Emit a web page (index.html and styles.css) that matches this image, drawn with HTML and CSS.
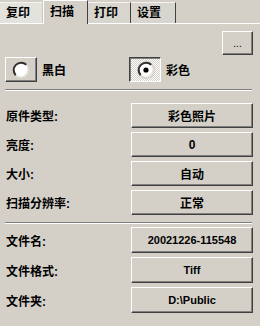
FILE: index.html
```html
<!DOCTYPE html>
<html lang="zh">
<head>
    <meta charset="UTF-8">
    <title>扫描</title>
    <link rel="stylesheet" href="styles.css">
</head>
<body>
    <div class="tabs">
        <div class="tab first">复印</div>
        <div class="tab active">扫描</div>
        <div class="tab">打印</div>
        <div class="tab">设置</div>
    </div>
    <div class="panel">
        <div class="top-row">
            <button class="btn more">...</button>
        </div>
        <div class="radio-row">
            <div class="radio-group">
                <button class="btn radio">
                    <svg width="18" height="18" viewBox="0 0 18 18">
                        <circle cx="9" cy="9" r="7.5" fill="#fff"/>
                        <path d="M3.7 14.3 A7.5 7.5 0 0 1 14.3 3.7" stroke="#303030" stroke-width="2" fill="none"/>
                        <path d="M14.6 4.2 A7.5 7.5 0 0 1 4.2 14.6" stroke="#e4e2dc" stroke-width="1.2" fill="none"/>
                    </svg>
                </button>
                <span class="radio-label">黑白</span>
            </div>
            <div class="radio-group">
                <button class="btn radio checked">
                    <svg width="18" height="18" viewBox="0 0 18 18">
                        <circle cx="9" cy="9" r="7.5" fill="#fff"/>
                        <path d="M3.7 14.3 A7.5 7.5 0 0 1 14.3 3.7" stroke="#303030" stroke-width="2" fill="none"/>
                        <path d="M14.6 4.2 A7.5 7.5 0 0 1 4.2 14.6" stroke="#e4e2dc" stroke-width="1.2" fill="none"/>
                        <circle cx="9" cy="9" r="2.6" fill="#000"/>
                    </svg>
                </button>
                <span class="radio-label">彩色</span>
            </div>
        </div>
        <div class="sep"></div>
        <div class="rows">
            <span class="label">原件类型:</span>
            <button class="btn value">彩色照片</button>
            <span class="label">亮度:</span>
            <button class="btn value">0</button>
            <span class="label">大小:</span>
            <button class="btn value">自动</button>
            <span class="label">扫描分辨率:</span>
            <button class="btn value">正常</button>
        </div>
        <div class="sep second"></div>
        <div class="rows files">
            <span class="label">文件名:</span>
            <button class="btn value small">20021226-115548</button>
            <span class="label">文件格式:</span>
            <button class="btn value small">Tiff</button>
            <span class="label">文件夹:</span>
            <button class="btn value small">D:\Public</button>
        </div>
    </div>
</body>
</html>
```

FILE: styles.css
```css
body {
    margin: 0;
    background-color: #d4d0c8;
    font-family: "Liberation Sans", "Noto Sans CJK SC", sans-serif;
    font-size: 12px;
    font-weight: bold;
    color: #000;
}
.tabs {
    display: flex;
    align-items: flex-end;
    height: 23px;
}
.tab {
    height: 21px;
    line-height: 21px;
    padding: 0 6px;
    box-sizing: border-box;
    border-left: 1px solid #404040;
    border-top: 1px solid #f4f3ef;
    background-color: #d8d5ce;
}
.tab.first {
    width: 43px;
    border-left: none;
    background-color: #e4e2dc;
    border-right: 1px solid #c8c5be;
}
.tab.active {
    width: 45px;
    height: 24px;
    line-height: 22px;
    margin-bottom: -1px;
    border-left: 1px solid #fff;
    border-top: 1px solid #fff;
    border-right: 1px solid #404040;
    background-color: #d4d0c8;
    position: relative;
}
.tab:nth-child(3) {
    width: 42px;
    border-left: none;
}
.tab:nth-child(4) {
    width: 46px;
    border-right: 1px solid #404040;
}
.panel {
    border-top: 1px solid #fff;
    padding: 7px 7px 0 5px;
}
.btn {
    font: inherit;
    color: #000;
    background-color: #d4d0c8;
    border: 1px solid;
    border-color: #fff #404040 #404040 #fff;
    box-shadow: inset -1px -1px #808080;
    padding: 0;
    margin: 0;
    box-sizing: border-box;
}
.top-row {
    display: flex;
    justify-content: flex-end;
}
.more {
    width: 31px;
    height: 24px;
    font-size: 10px;
    font-weight: normal;
}
.radio-row {
    display: flex;
    margin-top: 2px;
}
.radio-group {
    display: flex;
    align-items: center;
    width: 126px;
}
.radio {
    width: 32px;
    height: 25px;
    display: flex;
    align-items: center;
    justify-content: center;
}
.radio.checked {
    border-color: #404040 #fff #fff #404040;
    box-shadow: inset 1px 1px #808080;
    background-image: repeating-conic-gradient(#fff 0 25%, #d4d0c8 0 50%);
    background-size: 2px 2px;
}
.radio.checked svg {
    background-color: #d4d0c8;
    border-radius: 50%;
    margin: 1px 0 0 1px;
}
.radio-label {
    margin-left: 5px;
}
.sep {
    height: 0;
    border-top: 1px solid #808080;
    border-bottom: 1px solid #fff;
    margin: 7px 1px 12px 0;
}
.sep.second {
    margin: 7px 1px 3px 0;
}
.rows {
    display: grid;
    grid-template-columns: 126px 122px;
    row-gap: 4px;
    align-items: center;
}
.rows.files .value {
    height: 26px;
}
.label {
    padding-left: 1px;
}
.value {
    height: 25px;
}
.value.small {
    font-size: 11px;
}
```
